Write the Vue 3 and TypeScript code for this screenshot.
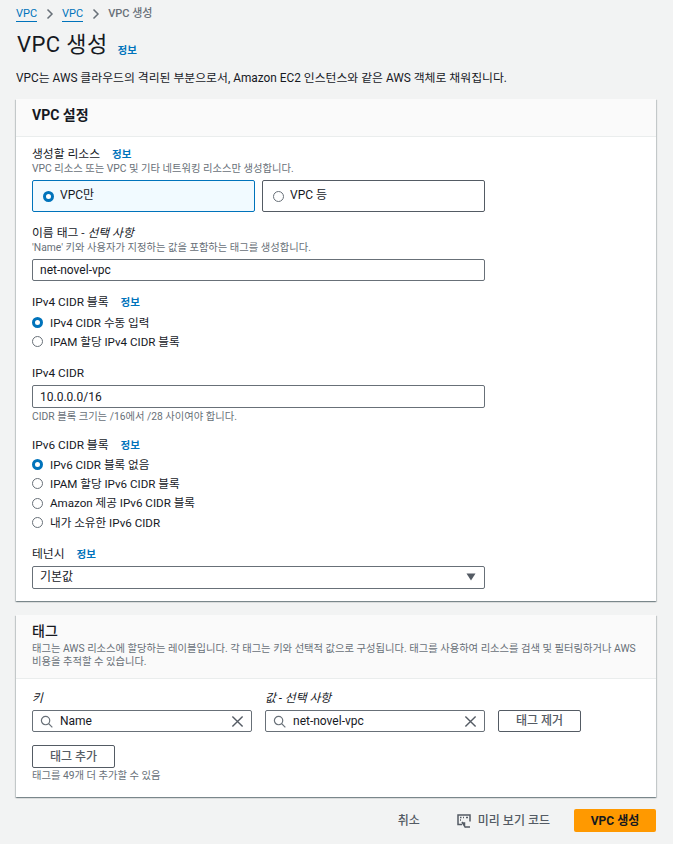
<script setup lang="ts">
interface RadioItem {
  label: string;
  checked?: boolean;
}

const ipv4Options: RadioItem[] = [
  { label: "IPv4 CIDR 수동 입력", checked: true },
  { label: "IPAM 할당 IPv4 CIDR 블록" },
];

const ipv6Options: RadioItem[] = [
  { label: "IPv6 CIDR 블록 없음", checked: true },
  { label: "IPAM 할당 IPv6 CIDR 블록" },
  { label: "Amazon 제공 IPv6 CIDR 블록" },
  { label: "내가 소유한 IPv6 CIDR" },
];
</script>

<template>
  <div class="page">
    <nav class="crumbs">
      <a>VPC</a>
      <svg class="chev" viewBox="0 0 8 12"><path d="M1.5 1.5 6 6l-4.500 4.500" /></svg>
      <a>VPC</a>
      <svg class="chev" viewBox="0 0 8 12"><path d="M1.5 1.5 6 6l-4.500 4.500" /></svg>
      <span>VPC 생성</span>
    </nav>

    <div class="title-row">
      <h1>VPC 생성</h1>
      <span class="info">정보</span>
    </div>
    <p class="lead">VPC는 AWS 클라우드의 격리된 부분으로서, Amazon EC2 인스턴스와 같은 AWS 객체로 채워집니다.</p>

    <section class="card">
      <header class="card-head">
        <h2>VPC 설정</h2>
      </header>
      <div class="card-body settings">
        <div class="field f-resource">
          <div class="label">생성할 리소스 <span class="info">정보</span></div>
          <div class="desc">VPC 리소스 또는 VPC 및 기타 네트워킹 리소스만 생성합니다.</div>
          <div class="tiles">
            <div class="tile active">
              <span class="radio on"></span>
              <span class="tile-text">VPC만</span>
            </div>
            <div class="tile">
              <span class="radio"></span>
              <span class="tile-text">VPC 등</span>
            </div>
          </div>
        </div>

        <div class="field f-name">
          <div class="label">이름 태그 - <i>선택 사항</i></div>
          <div class="desc">'Name' 키와 사용자가 지정하는 값을 포함하는 태그를 생성합니다.</div>
          <div class="input">net-novel-vpc</div>
        </div>

        <div class="field f-v4">
          <div class="label">IPv4 CIDR 블록 <span class="info">정보</span></div>
          <div class="radios">
            <div v-for="item in ipv4Options" :key="item.label" class="radio-row">
              <span class="radio" :class="{ on: item.checked }"></span>
              <span>{{ item.label }}</span>
            </div>
          </div>
        </div>

        <div class="field f-cidr">
          <div class="label">IPv4 CIDR</div>
          <div class="input">10.0.0.0/16</div>
          <div class="desc">CIDR 블록 크기는 /16에서 /28 사이여야 합니다.</div>
        </div>

        <div class="field f-v6">
          <div class="label">IPv6 CIDR 블록 <span class="info">정보</span></div>
          <div class="radios">
            <div v-for="item in ipv6Options" :key="item.label" class="radio-row">
              <span class="radio" :class="{ on: item.checked }"></span>
              <span>{{ item.label }}</span>
            </div>
          </div>
        </div>

        <div class="field f-tenancy">
          <div class="label">테넌시 <span class="info">정보</span></div>
          <div class="input select">
            <span>기본값</span>
            <svg class="caret" viewBox="0 0 10 8"><path d="M0.500 0.500h9L5 7.500z" /></svg>
          </div>
        </div>
      </div>
    </section>

    <section class="card tags">
      <header class="card-head tall">
        <h2>태그</h2>
        <div class="desc">태그는 AWS 리소스에 할당하는 레이블입니다. 각 태그는 키와 선택적 값으로 구성됩니다. 태그를 사용하여 리소스를 검색 및 필터링하거나 AWS 비용을 추적할 수 있습니다.</div>
      </header>
      <div class="card-body">
        <div class="tag-grid">
          <div class="label"><i>키</i></div>
          <div class="label"><i>값 - 선택 사항</i></div>
          <div></div>
          <div class="input search">
            <svg class="ico" viewBox="0 0 14 14"><circle cx="6" cy="6" r="4.500" /><path d="m9.300 9.300 4 4" /></svg>
            <span>Name</span>
            <svg class="ico x" viewBox="0 0 14 14"><path d="m1.500 1.500 11 11M12.500 1.500l-11 11" /></svg>
          </div>
          <div class="input search">
            <svg class="ico" viewBox="0 0 14 14"><circle cx="6" cy="6" r="4.500" /><path d="m9.300 9.300 4 4" /></svg>
            <span>net-novel-vpc</span>
            <svg class="ico x" viewBox="0 0 14 14"><path d="m1.500 1.500 11 11M12.500 1.500l-11 11" /></svg>
          </div>
          <button class="btn">태그 제거</button>
        </div>
        <button class="btn add">태그 추가</button>
        <div class="desc">태그를 49개 더 추가할 수 있음</div>
      </div>
    </section>

    <footer class="actions">
      <span class="link-btn">취소</span>
      <span class="link-btn preview">
        <svg class="preview-ico" viewBox="0 0 14 14">
          <path d="M5 10.500H1V1h12v6.500" />
          <path d="M3 3.500h1.500M6 3.500h1M9 3.500h2M3 6h1M8 13h5" />
          <path d="m5 8 2.500 4V9H5" />
        </svg>
        미리 보기 코드
      </span>
      <button class="primary">VPC 생성</button>
    </footer>
  </div>
</template>

<style>
html,
body {
  margin: 0;
  background: #f2f3f3;
}
</style>

<style scoped>
.page {
  width: 673px;
  height: 844px;
  box-sizing: border-box;
  padding: 0 17px 0 16px;
  overflow: hidden;
  background: #f2f3f3;
  color: #16191f;
  font-family: Roboto, "Noto Sans CJK KR", sans-serif;
  font-size: 12px;
  line-height: 16px;
}
.crumbs {
  display: flex;
  align-items: center;
  gap: 8.500px;
  height: 16px;
  padding-top: 6px;
  font-size: 11px;
  color: #687078;
  font-weight: 500;
}
.crumbs a {
  color: #0073bb;
  font-weight: 400;
  border-bottom: 1px solid #0073bb;
  line-height: 14px;
}
.chev {
  width: 8px;
  height: 12px;
  fill: none;
  stroke: #687078;
  stroke-width: 1.500;
}
.title-row {
  display: flex;
  align-items: center;
  height: 30px;
  margin-top: 8px;
  gap: 10px;
  padding-left: 1px;
}
h1 {
  margin: 0;
  font-size: 22px;
  line-height: 30px;
  font-weight: 400;
  letter-spacing: 0.400px;
}
.info {
  color: #0073bb;
  font-size: 10.500px;
  line-height: 14px;
  font-weight: 700;
}
.title-row .info {
  margin-top: 12px;
}
.lead {
  margin: 10px 0 0;
  font-size: 11.850px;
  line-height: 16px;
}
.card {
  background: #fff;
  box-shadow: 0 1px 1px 0 rgba(0, 28, 36, 0.3), 1px 1px 1px 0 rgba(0, 28, 36, 0.15), -1px 1px 1px 0 rgba(0, 28, 36, 0.15);
  margin-top: 13px;
}
.card-head {
  height: 38px;
  box-sizing: border-box;
  padding: 7px 16px 0;
  background: #fafafa;
  border-bottom: 1px solid #eaeded;
}
.card-head.tall {
  height: 64px;
  padding-top: 7px;
}
h2 {
  margin: 0;
  font-size: 14px;
  line-height: 18px;
  font-weight: 700;
}
.tall h2 {
  font-weight: 500;
}
.card-body {
  padding: 0 16px;
}
.settings {
  height: 464px;
  box-sizing: border-box;
  padding-top: 8px;
}
.tags {
  margin-top: 14px;
}
.tags .card-body {
  height: 118px;
  box-sizing: border-box;
  padding-top: 10px;
}
.field {
  width: 453px;
}
.label {
  height: 16px;
  font-size: 11.800px;
  line-height: 18px;
}
.label .info {
  margin-left: 9px;
}
.desc {
  margin-top: 1px;
  font-size: 10.300px;
  line-height: 13px;
  color: #687078;
}
.tiles {
  display: flex;
  gap: 7px;
  margin-top: 5px;
}
.tile {
  flex: 1;
  height: 32px;
  box-sizing: border-box;
  display: flex;
  align-items: center;
  gap: 6px;
  padding-left: 10px;
  border: 1px solid #545b64;
  border-radius: 2px;
  font-size: 12px;
}
.tile.active {
  background: #f1faff;
  border-color: #0073bb;
}
.tile-text {
  margin-top: -3px;
}
.radio {
  flex: none;
  width: 11px;
  height: 11px;
  box-sizing: border-box;
  border: 1px solid #687078;
  border-radius: 50%;
  background: #fff;
}
.radio.on {
  border: 3.500px solid #0073bb;
}
.f-name {
  margin-top: 12px;
}
.f-v4 {
  margin-top: 12px;
}
.f-cidr {
  margin-top: 13px;
}
.f-v6 {
  margin-top: 13px;
}
.f-tenancy {
  margin-top: 12.600px;
}
.input {
  height: 23px;
  box-sizing: border-box;
  margin-top: 5px;
  padding: 0 7px;
  display: flex;
  align-items: center;
  background: #fff;
  border: 1px solid #687078;
  border-radius: 2px;
  font-size: 12px;
}
.f-name .input {
  height: 22px;
}
.f-cidr .desc {
  margin-top: 2px;
}
.radios {
  display: flex;
  flex-direction: column;
  margin-top: 4px;
}
.radio-row {
  display: flex;
  align-items: center;
  gap: 7px;
  height: 19px;
  font-size: 11.600px;
}
.f-v6 .radios {
  margin-top: 3px;
}
.f-v6 .radio-row {
  height: 19.340px;
}
.select {
  justify-content: space-between;
}
.caret {
  width: 10px;
  height: 8px;
  fill: #545b64;
  margin-right: 1px;
}
.tag-grid {
  display: grid;
  grid-template-columns: 220px 220px 83px;
  column-gap: 13px;
  row-gap: 5px;
  align-items: center;
}
.tag-grid .input {
  height: 22px;
  margin-top: 0;
}
.search {
  gap: 7px;
}
.search span {
  flex: 1;
}
.ico {
  width: 13px;
  height: 13px;
  fill: none;
  stroke: #687078;
  stroke-width: 1.300;
}
.ico.x {
  stroke: #545b64;
  stroke-width: 1.500;
}
.btn {
  width: 83px;
  height: 22px;
  padding: 0;
  background: #fff;
  border: 1px solid #545b64;
  border-radius: 2px;
  color: #545b64;
  font: 500 12px/16px Roboto, "Noto Sans CJK KR", sans-serif;
}
.add {
  display: block;
  height: 23px;
  margin-top: 13px;
}
.card-body > .desc {
  margin-top: 1px;
}
.card-head .desc {
  margin-top: 2px;
  word-break: keep-all;
}
.actions {
  display: flex;
  align-items: center;
  justify-content: flex-end;
  height: 23px;
  margin-top: 12px;
}
.link-btn {
  color: #545b64;
  font-size: 12px;
  font-weight: 500;
}
.preview {
  display: flex;
  align-items: center;
  gap: 7px;
  margin-left: 37px;
}
.preview-ico {
  width: 14px;
  height: 14px;
  fill: none;
  stroke: #545b64;
  stroke-width: 1.500;
}
.primary {
  width: 82px;
  height: 23px;
  margin-left: 24px;
  padding: 0;
  background: #ff9900;
  border: none;
  border-radius: 2px;
  color: #16191f;
  font: 700 12px/16px Roboto, "Noto Sans CJK KR", sans-serif;
}
</style>
